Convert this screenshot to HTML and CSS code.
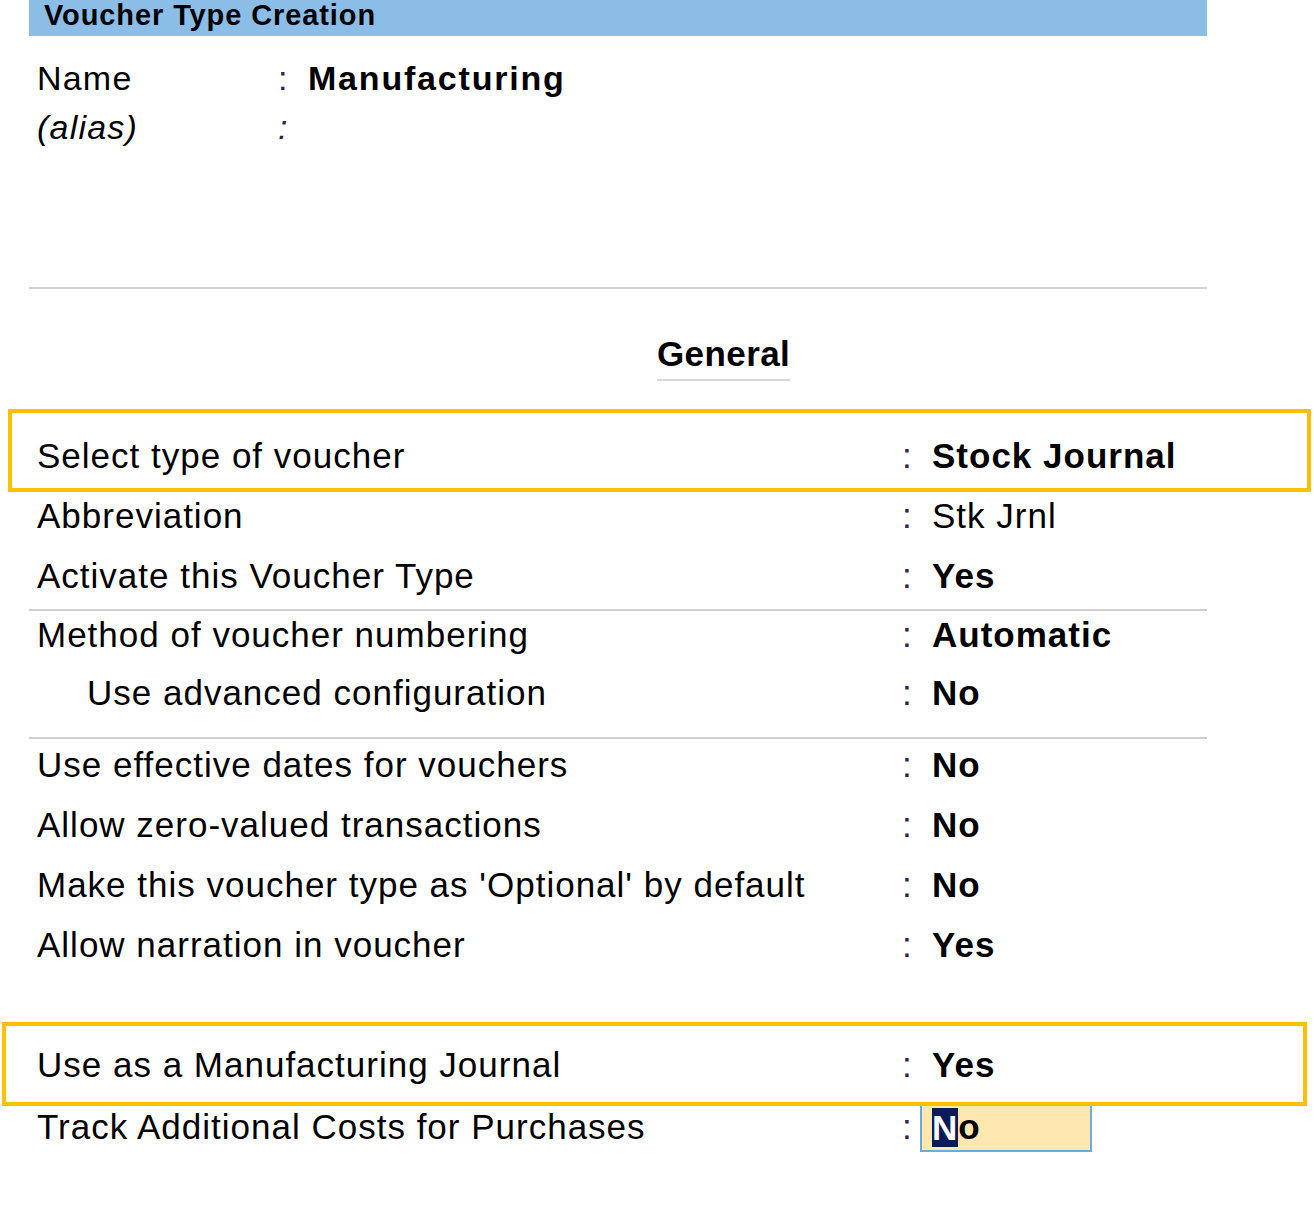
FILE: index.html
```html
<!DOCTYPE html>
<html lang="en">
<head>
  <meta charset="UTF-8">
  <title>Voucher Type Creation</title>
  <link rel="stylesheet" href="styles.css">
</head>
<body>

  <div class="screen">
    <div class="title-bar">Voucher Type Creation</div>

    <div class="head-fields">
      <div class="field">
        <span class="field-label">Name</span>
        <span class="colon">:</span>
        <span class="field-value">Manufacturing</span>
      </div>
      <div class="field">
        <span class="field-label alias">(alias)</span>
        <span class="colon alias">:</span>
        <span class="field-value"></span>
      </div>
    </div>

    <div class="divider"></div>

    <div class="section-title"><span>General</span></div>

    <!-- voucher basics -->
    <div class="group basics">
      <div class="row marked first-mark">
        <span class="row-label">Select type of voucher</span>
        <span class="colon">:</span>
        <span class="row-value bold">Stock Journal</span>
      </div>
      <div class="row">
        <span class="row-label">Abbreviation</span>
        <span class="colon">:</span>
        <span class="row-value">Stk Jrnl</span>
      </div>
      <div class="row">
        <span class="row-label">Activate this Voucher Type</span>
        <span class="colon">:</span>
        <span class="row-value bold">Yes</span>
      </div>
    </div>

    <!-- numbering -->
    <div class="group numbering">
      <div class="row">
        <span class="row-label">Method of voucher numbering</span>
        <span class="colon">:</span>
        <span class="row-value bold">Automatic</span>
      </div>
      <div class="row">
        <span class="row-label indent">Use advanced configuration</span>
        <span class="colon">:</span>
        <span class="row-value bold">No</span>
      </div>
    </div>

    <!-- other options -->
    <div class="group last">
      <div class="row">
        <span class="row-label">Use effective dates for vouchers</span>
        <span class="colon">:</span>
        <span class="row-value bold">No</span>
      </div>
      <div class="row">
        <span class="row-label">Allow zero-valued transactions</span>
        <span class="colon">:</span>
        <span class="row-value bold">No</span>
      </div>
      <div class="row">
        <span class="row-label">Make this voucher type as 'Optional' by default</span>
        <span class="colon">:</span>
        <span class="row-value bold">No</span>
      </div>
      <div class="row">
        <span class="row-label">Allow narration in voucher</span>
        <span class="colon">:</span>
        <span class="row-value bold">Yes</span>
      </div>
      <div class="row blank"></div>
      <div class="row marked second-mark">
        <span class="row-label">Use as a Manufacturing Journal</span>
        <span class="colon">:</span>
        <span class="row-value bold">Yes</span>
      </div>
      <div class="row editing">
        <span class="row-label">Track Additional Costs for Purchases</span>
        <span class="colon">:</span>
        <span class="edit-box bold"><span class="cursor">N</span>o</span>
      </div>
    </div>
  </div>

</body>
</html>
```

FILE: styles.css
```css
body {
  margin: 0;
  background: #fff;
  color: #000;
  font-family: "Liberation Sans", Arial, sans-serif;
}

.screen {
  width: 1178px;
  margin-left: 29px;
  padding-bottom: 40px;
}

.title-bar {
  height: 36px;
  line-height: 31px;
  padding-left: 15px;
  background-color: #8bbde6;
  font-size: 29px;
  font-weight: bold;
  letter-spacing: 0.9px;
}

.head-fields {
  margin-top: 18px;
  display: flex;
  flex-direction: column;
  gap: 1px;
}

.field {
  display: flex;
  align-items: center;
  height: 48px;
  padding-left: 8px;
  font-size: 34px;
  letter-spacing: 1.2px;
}

.field-label {
  width: 241px;
}

.field .colon {
  width: 30px;
}

.field-value {
  font-weight: bold;
  letter-spacing: 1.8px;
}

.alias {
  font-style: italic;
}

.divider {
  margin-top: 136px;
  height: 2px;
  background-color: #d4d4d4;
}

.section-title {
  margin-top: 45px;
  padding-left: 628px;
}

.section-title span {
  display: inline-block;
  font-size: 35px;
  line-height: 40px;
  font-weight: bold;
  letter-spacing: 0.4px;
  padding-bottom: 5px;
  border-bottom: 2px solid #d8d8d8;
}

.group {
  display: flex;
  flex-direction: column;
  gap: 14px;
  border-bottom: 2px solid #d0d0d0;
}

.basics {
  margin-top: 52px;
  padding-bottom: 10px;
}

.numbering {
  gap: 12px;
  padding-top: 1px;
  padding-bottom: 21px;
}

.group.last {
  padding-top: 3px;
  border-bottom: none;
}

.row {
  position: relative;
  display: flex;
  align-items: center;
  height: 46px;
  padding-left: 8px;
  font-size: 35px;
  letter-spacing: 1px;
}

.row-label {
  width: 865px;
}

.row-label.indent {
  width: 815px;
  padding-left: 50px;
}

.colon {
  width: 30px;
  color: #2b2250;
}

.bold {
  font-weight: bold;
}

/* highlight frames drawn over the rows */
.marked::after {
  content: "";
  position: absolute;
  border: 4px solid #ffc000;
  pointer-events: none;
  z-index: 1;
}

.first-mark::after {
  top: -24px;
  bottom: -13px;
  left: -21px;
  right: -104px;
}

.second-mark::after {
  top: -20px;
  bottom: -18px;
  left: -27px;
  right: -100px;
}

.editing {
  margin-top: 2px;
}

.edit-box {
  display: flex;
  align-items: center;
  flex: none;
  box-sizing: border-box;
  width: 172px;
  height: 50px;
  margin-left: -12px;
  padding-left: 10px;
  background-color: #fee8b0;
  border: 2px solid #6fa8dc;
}

.cursor {
  background-color: #0b1a58;
  color: #fff;
  line-height: 39px;
}
```
